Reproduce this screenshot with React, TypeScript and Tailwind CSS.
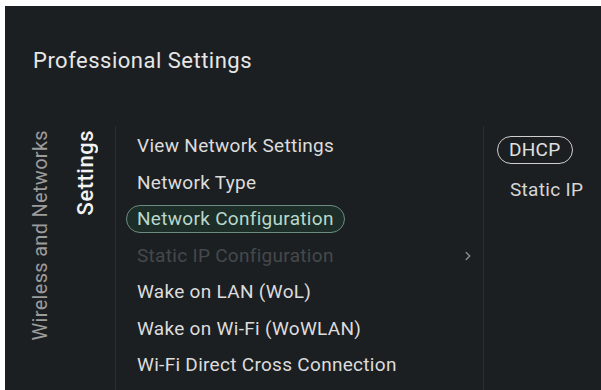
import { ChevronRight } from 'lucide-react'

const menu = [
  { label: 'View Network Settings' },
  { label: 'Network Type' },
  { label: 'Network Configuration', active: true },
  { label: 'Static IP Configuration', disabled: true, more: true },
  { label: 'Wake on LAN (WoL)' },
  { label: 'Wake on Wi-Fi (WoWLAN)' },
  { label: 'Wi-Fi Direct Cross Connection' },
]

export default function App() {
  return (
    <div className="w-[601px] h-[390px] bg-white pt-[6px] pl-[5px] font-['Roboto','Liberation_Sans',sans-serif]">
      <div className="w-full h-full bg-[#1c1f22] flex flex-col overflow-hidden">
        <div className="pl-[28px] pt-[41px] text-[22px] leading-[28px] text-[#e6e6e6] tracking-[0.5px]">
          Professional Settings
        </div>

        <div className="flex flex-1 mt-[51px]">
          {/* breadcrumbs */}
          <div className="w-[110px] flex items-start pl-[22px] gap-[20px] pt-[4px]">
            <span className="[writing-mode:vertical-rl] rotate-180 text-[20px] leading-[26px] text-[#9c9c9c] tracking-[0.3px]">
              Wireless and Networks
            </span>
            <span className="[writing-mode:vertical-rl] rotate-180 text-[22px] leading-[26px] font-medium text-[#f2f2f2] tracking-[0.5px]">
              Settings
            </span>
          </div>

          {/* menu */}
          <div className="w-[369px] border-l border-r border-[#2a2e31] pt-[2px] pl-[10px] pr-[8px]">
            {menu.map((item) => (
              <div key={item.label} className="h-[36.5px] flex items-center justify-between">
                <span
                  className={
                    item.active
                      ? 'px-[10px] h-[28px] flex items-center rounded-full border-[1.5px] border-[#6c8c80] bg-[#1d2e28] text-[#b9d8cb] text-[19px] tracking-[0.3px]'
                      : item.disabled
                        ? 'px-[11px] text-[19px] tracking-[0.3px] text-[#45494c]'
                        : 'px-[11px] text-[19px] tracking-[0.3px] text-[#dcdcdc]'
                  }
                >
                  {item.label}
                </span>
                {item.more && <ChevronRight className="w-[14px] h-[14px] text-[#8a8d90]" strokeWidth={2.5} />}
              </div>
            ))}
          </div>

          {/* options */}
          <div className="flex-1 flex flex-col items-start pl-[13px] pt-[10px]">
            <span className="h-[28px] px-[11px] flex items-center rounded-full border-[1.5px] border-[#cfcfcf] text-[19px] text-[#e0e0e0] tracking-[0.3px]">
              DHCP
            </span>
            <span className="mt-[12px] pl-[13px] text-[19px] text-[#d6d6d6] tracking-[0.3px]">Static IP</span>
          </div>
        </div>
      </div>
    </div>
  )
}
